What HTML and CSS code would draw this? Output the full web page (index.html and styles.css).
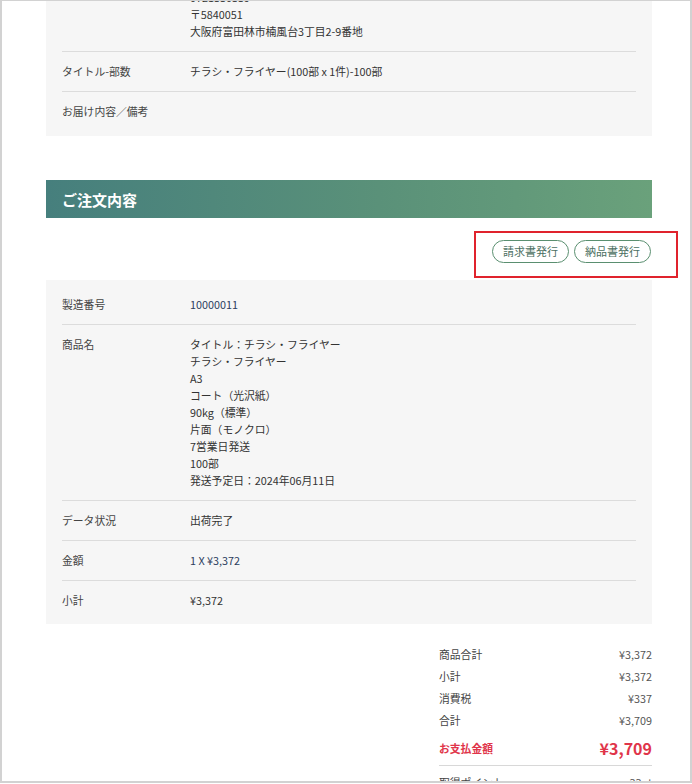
FILE: index.html
```html
<!DOCTYPE html>
<html lang="ja">
<head>
<meta charset="utf-8">
<link rel="stylesheet" href="styles.css">
</head>
<body>
<div class="frame">
  <div class="content">
    <div class="info-box">
      <div class="row">
        <div class="label">お届け先</div>
        <div class="value">山田 太郎<br>0721330339<br>〒5840051<br>大阪府富田林市楠風台3丁目2-9番地</div>
      </div>
      <div class="row">
        <div class="label">タイトル-部数</div>
        <div class="value">チラシ・フライヤー(100部 x 1件)-100部</div>
      </div>
      <div class="row">
        <div class="label">お届け内容／備考</div>
        <div class="value"></div>
      </div>
    </div>

    <h2 class="section-title">ご注文内容</h2>

    <div class="actions">
      <button class="pill">請求書発行</button>
      <button class="pill">納品書発行</button>
    </div>

    <div class="info-box detail">
      <div class="row">
        <div class="label">製造番号</div>
        <div class="value num">10000011</div>
      </div>
      <div class="row">
        <div class="label">商品名</div>
        <div class="value">タイトル：チラシ・フライヤー<br>チラシ・フライヤー<br>A3<br>コート（光沢紙）<br>90kg（標準）<br>片面（モノクロ）<br>7営業日発送<br>100部<br>発送予定日：2024年06月11日</div>
      </div>
      <div class="row">
        <div class="label">データ状況</div>
        <div class="value">出荷完了</div>
      </div>
      <div class="row">
        <div class="label">金額</div>
        <div class="value num">1 X ¥3,372</div>
      </div>
      <div class="row">
        <div class="label">小計</div>
        <div class="value">¥3,372</div>
      </div>
    </div>

    <div class="summary">
      <div class="sum-row"><span>商品合計</span><span>¥3,372</span></div>
      <div class="sum-row"><span>小計</span><span>¥3,372</span></div>
      <div class="sum-row"><span>消費税</span><span>¥337</span></div>
      <div class="sum-row"><span>合計</span><span>¥3,709</span></div>
      <div class="sum-row total"><span>お支払金額</span><span class="big">¥3,709</span></div>
      <div class="sum-row points"><span>取得ポイント</span><span>33pt</span></div>
    </div>
  </div>
  <div class="highlight"></div>
</div>
</body>
</html>
```

FILE: styles.css
```css
* { box-sizing: border-box; }
html, body { margin: 0; padding: 0; background: #fff; }
body {
  font-family: "Noto Sans CJK JP", "Noto Sans", sans-serif;
  font-size: 10.8px;
  color: #333;
}
.frame {
  position: relative;
  width: 692px;
  height: 783px;
  border: 1px solid #d2d2d2;
  border-left-width: 2px;
  border-right-width: 2px;
  border-bottom-width: 2px;
  overflow: hidden;
}
.content {
  width: 606px;
  margin-left: 44px;
  margin-top: -44px;
}
.info-box {
  background: #f6f6f6;
  padding: 4px 16px;
}
.info-box:first-child { padding-bottom: 5px; }
.info-box.detail { padding-top: 5px; }
.row {
  display: flex;
  padding: 11px 0;
  line-height: 17px;
  border-bottom: 1px solid #dcdcdc;
}
.row:last-child { border-bottom: none; }
.label {
  width: 128px;
  flex: none;
  color: #444;
}
.value { color: #333; }
.num { color: #2c3d5e; }
.section-title {
  margin: 44px 0 0;
  height: 38px;
  padding-left: 16px;
  display: flex;
  align-items: center;
  font-size: 15px;
  font-weight: 700;
  color: #fff;
  background: linear-gradient(90deg, #467f7d 0%, #5a9179 55%, #6aa17b 100%);
}
.actions {
  display: flex;
  justify-content: flex-end;
  gap: 5px;
  margin: 22px 1px 17px 0;
}
.pill {
  font-family: inherit;
  font-size: 11px;
  height: 23px;
  width: 77px;
  padding: 0;
  border: 1px solid #5a8f70;
  border-radius: 12px;
  background: #fff;
  color: #4b6f61;
  line-height: 21px;
}
.summary {
  width: 213px;
  margin: 19px 0 0 auto;
}
.sum-row {
  display: flex;
  justify-content: space-between;
  height: 22px;
  line-height: 22px;
  color: #444;
}
.sum-row span:last-child { color: #555; }
.sum-row.total {
  height: 33px;
  line-height: 31px;
  margin-top: 2px;
  color: #e0354a;
  font-weight: 700;
  border-bottom: 1px solid #d8d8d8;
}
.sum-row.total span.big {
  color: #e0354a;
  font-size: 16px;
  font-weight: 700;
}
.sum-row.points { margin-top: 5px; }
.highlight {
  position: absolute;
  left: 472px;
  top: 230px;
  width: 204px;
  height: 47px;
  border: 2px solid #e0232d;
}
```
